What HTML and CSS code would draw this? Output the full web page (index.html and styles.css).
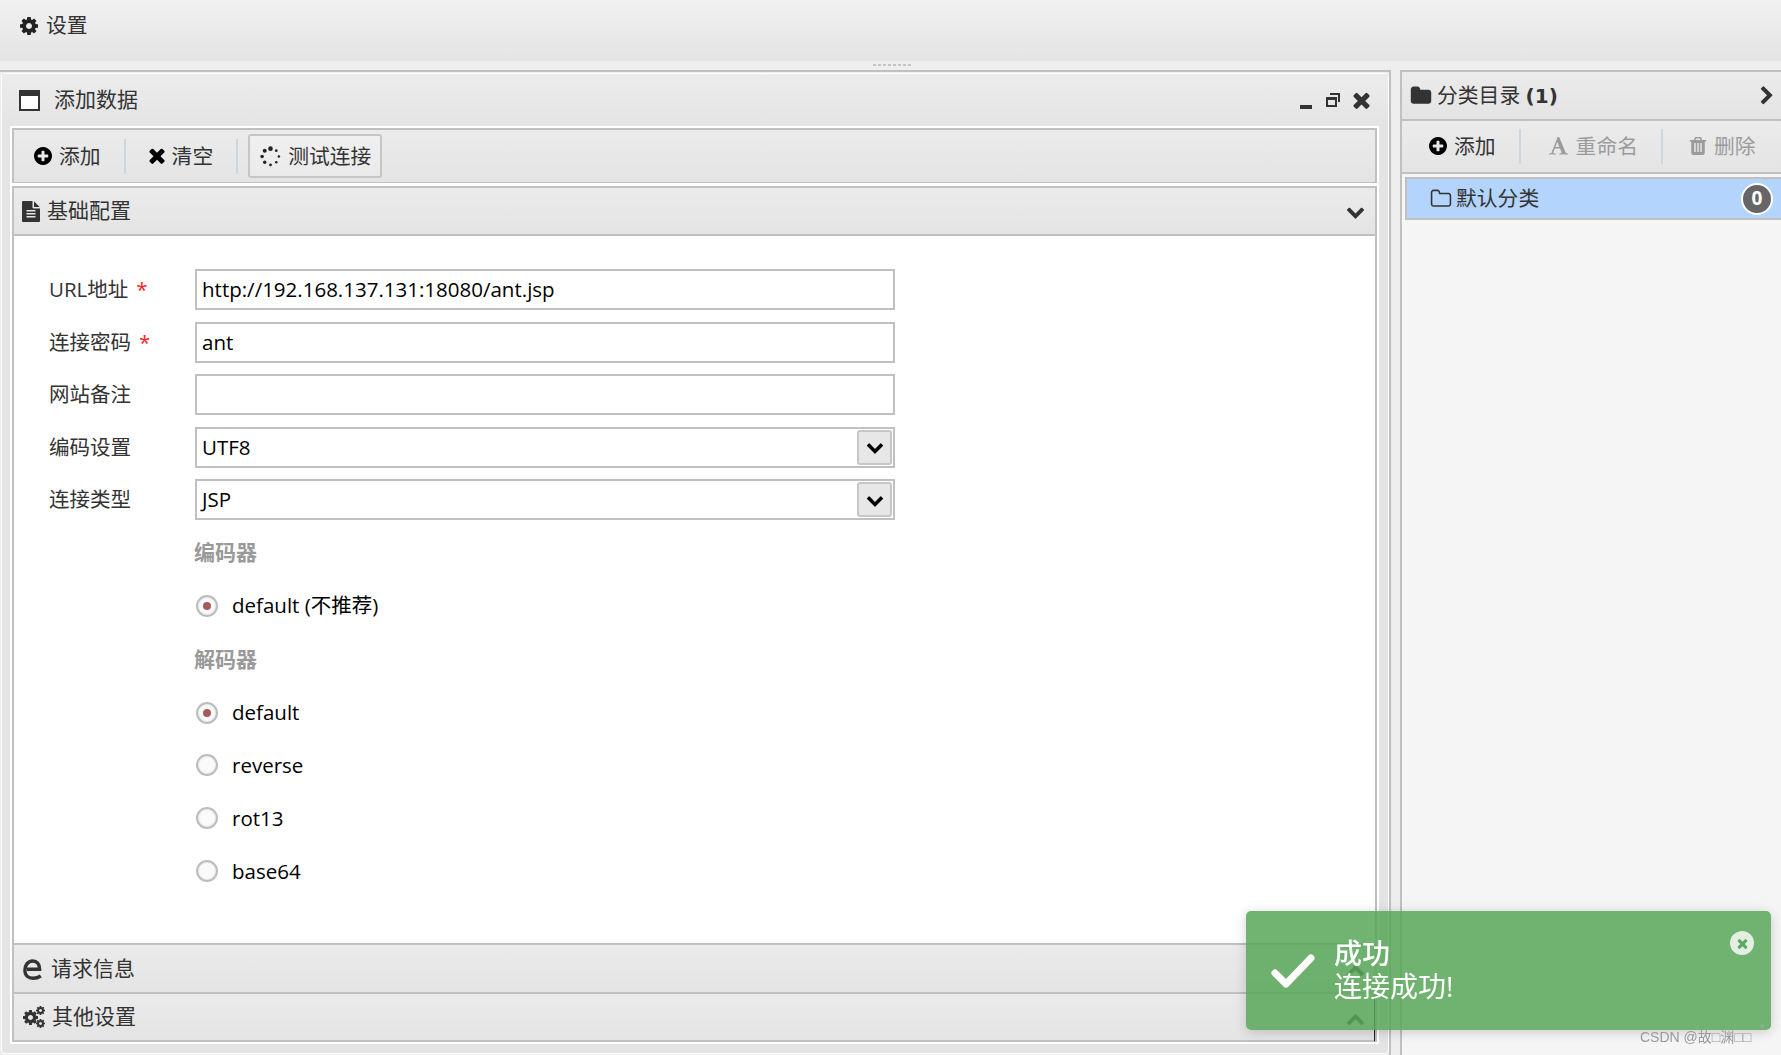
FILE: index.html
```html
<!DOCTYPE html>
<html lang="zh-CN">
<head>
<meta charset="utf-8">
<title>添加数据</title>
<link rel="stylesheet" href="styles.css">
</head>
<body>
<svg class="defs" width="0" height="0" aria-hidden="true">
  <symbol id="i-cog" viewBox="128 128 1536 1536"><path d="M1152 896q0-106-75-181t-181-75-181 75-75 181 75 181 181 75 181-75 75-181zm512-109v222q0 12-8 23t-20 13l-185 28q-19 54-39 91 35 50 107 138 10 12 10 25t-9 23q-27 37-99 108t-94 71q-12 0-26-9l-138-108q-44 23-91 38-16 136-29 186-7 28-36 28h-222q-14 0-24.5-8.5t-11.5-21.5l-28-184q-49-16-90-37l-141 107q-10 9-25 9-14 0-25-11-126-114-165-168-7-10-7-23 0-12 8-23 15-21 51-66.5t54-70.5q-27-50-41-99l-183-27q-13-2-21-12.5t-8-23.5v-222q0-12 8-23t19-13l186-28q14-46 39-92-40-57-107-138-10-12-10-24 0-10 9-23 26-36 98.5-107.5t94.5-71.5q13 0 26 10l138 107q44-23 91-38 16-136 29-186 7-28 36-28h222q14 0 24.5 8.5t11.5 21.5l28 184q49 16 90 37l142-107q9-9 24-9 13 0 25 10 129 119 165 170 7 8 7 22 0 12-8 23-15 21-51 66.5t-54 70.5q26 50 41 98l183 28q13 2 21 12.5t8 23.5z"/></symbol>
  <symbol id="i-plus" viewBox="128 128 1536 1536"><path d="M1344 960v-128q0-26-19-45t-45-19h-256v-256q0-26-19-45t-45-19h-128q-26 0-45 19t-19 45v256h-256q-26 0-45 19t-19 45v128q0 26 19 45t45 19h256v256q0 26 19 45t45 19h128q26 0 45-19t19-45v-256h256q26 0 45-19t19-45zm320-64q0 209-103 385.5t-279.5 279.5-385.5 103-385.5-103-279.5-279.5-103-385.5 103-385.5 279.5-279.5 385.5-103 385.5 103 279.5 279.5 103 385.5z"/></symbol>
  <symbol id="i-times" viewBox="280 230 1230 1330"><path d="M1490 1322q0 40-28 68l-136 136q-28 28-68 28t-68-28l-294-294-294 294q-28 28-68 28t-68-28l-136-136q-28-28-28-68t28-68l294-294-294-294q-28-28-28-68t28-68l136-136q28-28 68-28t68 28l294 294 294-294q28-28 68-28t68 28l136 136q28 28 28 68t-28 68l-294 294 294 294q28 28 28 68z"/></symbol>
  <symbol id="i-down" viewBox="0 0 1792 1792"><path d="M1683 808l-742 741q-19 19-45 19t-45-19l-742-741q-19-19-19-45.5t19-45.5l166-165q19-19 45-19t45 19l531 531 531-531q19-19 45-19t45 19l166 165q19 19 19 45.5t-19 45.5z"/></symbol>
  <symbol id="i-up" viewBox="0 0 1792 1792"><path d="M1683 1331l-166 165q-19 19-45 19t-45-19l-531-531-531 531q-19 19-45 19t-45-19l-166-165q-19-19-19-45.5t19-45.5l742-741q19-19 45-19t45 19l742 741q19 19 19 45.5t-19 45.5z"/></symbol>
  <symbol id="i-right" viewBox="0 0 1792 1792"><path d="M1363 877l-742 742q-19 19-45 19t-45-19l-166-166q-19-19-19-45t19-45l531-531-531-531q-19-19-19-45t19-45l166-166q19-19 45-19t45 19l742 742q19 19 19 45t-19 45z"/></symbol>
  <symbol id="i-folder" viewBox="0 0 1792 1792"><path d="M1728 608v704q0 92-66 158t-158 66h-1216q-92 0-158-66t-66-158v-960q0-92 66-158t158-66h320q92 0 158 66t66 158v32h672q92 0 158 66t66 158z"/></symbol>
  <symbol id="i-folder-o" viewBox="0 0 1792 1792"><path d="M1600 1312v-704q0-40-28-68t-68-28h-704q-40 0-68-28t-28-68v-64q0-40-28-68t-68-28h-320q-40 0-68 28t-28 68v960q0 40 28 68t68 28h1216q40 0 68-28t28-68zm128-704v704q0 92-66 158t-158 66h-1216q-92 0-158-66t-66-158v-960q0-92 66-158t158-66h320q92 0 158 66t66 158v32h672q92 0 158 66t66 158z"/></symbol>
  <symbol id="i-file" viewBox="128 0 1536 1792"><path d="M1596 476q14 14 28 36h-472v-472q22 14 36 28zm-476 164h544v1056q0 40-28 68t-68 28h-1344q-40 0-68-28t-28-68v-1600q0-40 28-68t68-28h800v544q0 40 28 68t68 28zm160 736v-64q0-14-9-23t-23-9h-704q-14 0-23 9t-9 23v64q0 14 9 23t23 9h704q14 0 23-9t9-23zm0-256v-64q0-14-9-23t-23-9h-704q-14 0-23 9t-9 23v64q0 14 9 23t23 9h704q14 0 23-9t9-23zm0-256v-64q0-14-9-23t-23-9h-704q-14 0-23 9t-9 23v64q0 14 9 23t23 9h704q14 0 23-9t9-23z"/></symbol>
  <symbol id="i-trash" viewBox="128 128 1536 1536"><path d="M704 1376v-704q0-14-9-23t-23-9h-64q-14 0-23 9t-9 23v704q0 14 9 23t23 9h64q14 0 23-9t9-23zm256 0v-704q0-14-9-23t-23-9h-64q-14 0-23 9t-9 23v704q0 14 9 23t23 9h64q14 0 23-9t9-23zm256 0v-704q0-14-9-23t-23-9h-64q-14 0-23 9t-9 23v704q0 14 9 23t23 9h64q14 0 23-9t9-23zm-544-992h448l-48-117q-7-9-17-11h-317q-10 2-17 11zm928 32v64q0 14-9 23t-23 9h-96v948q0 83-47 143.5t-113 60.5h-832q-66 0-113-58.5t-47-141.5v-952h-96q-14 0-23-9t-9-23v-64q0-14 9-23t23-9h309l70-167q15-37 54-63t79-26h320q40 0 79 26t54 63l70 167h309q14 0 23 9t9 23z"/></symbol>
  <symbol id="i-font" viewBox="64 128 1664 1664"><path d="M789 559l-170 450q33 0 136.5 2t160.5 2q19 0 57-2-87-253-184-452zm-725 1105l2-79q23-7 56-12.5t57-10.5 49.5-14.5 44.5-29 31-50.5l237-616 280-724h128q8 14 11 21l205 480q33 78 106 257.5t114 274.5q15 34 58 144.5t72 168.5q20 45 35 57 19 15 88 29.5t84 20.5q6 38 6 57 0 5-.5 13.5t-.5 12.5q-63 0-190-8t-191-8q-76 0-215 7t-178 8q0-43 4-78l131-28q1 0 12.5-2.5t15.5-3.5 14.5-4.5 15-6.5 11-8 9-11 2.5-14q0-16-31-96.5t-72-177.5-42-100l-450-2q-26 58-76.5 195.5t-50.5 162.5q0 22 14 37.5t43.5 24.5 49 13.5 57.5 8.5 41 4q1 19 1 58 0 9-2 27-58 0-174.5-10t-174.5-10q-8 0-26.5 4t-21.5 4q-80 14-188 14z"/></symbol>
</svg>

<header class="topbar">
  <svg class="ic ic-18"><use href="#i-cog"/></svg>
  <span>设置</span>
</header>
<div class="splitter"><span class="grip"></span></div>

<main class="main">
  <section class="left">
    <div class="win">
      <div class="win-head">
        <svg class="window-ic" viewBox="0 0 21 21"><rect x="1" y="1" width="19" height="19" fill="#fff" stroke="#333" stroke-width="2"/><rect x="0" y="0" width="21" height="6" fill="#333"/></svg>
        <span class="win-title">添加数据</span>
        <span class="win-ctrls">
          <svg class="min-ic" viewBox="0 0 12 4"><rect width="12" height="4" fill="#333"/></svg>
          <svg class="restore-ic" viewBox="0 0 14 14"><path d="M4 1h9v8M1 5h9v8H1z M1 6h9" fill="none" stroke="#333" stroke-width="2"/></svg>
          <svg class="ic close-ic"><use href="#i-times"/></svg>
        </span>
      </div>
      <div class="win-body">
        <div class="toolbar">
          <span class="tool"><svg class="ic ic-plus black"><use href="#i-plus"/></svg>添加</span>
          <span class="sep"></span>
          <span class="tool"><svg class="ic ic-x black"><use href="#i-times"/></svg>清空</span>
          <span class="sep"></span>
          <span class="tool tool-btn">
            <svg class="spin" viewBox="0 0 20 20"><g fill="#222"><circle cx="10" cy="2.5" r="2.2"/><circle cx="15.5" cy="4.5" r="1.3"/><circle cx="18" cy="10" r="1.2"/><circle cx="15.5" cy="15.5" r="1.2"/><circle cx="10" cy="18" r="1.3"/><circle cx="4.5" cy="15.5" r="1.6"/><circle cx="2" cy="10" r="1.7"/><circle cx="4.5" cy="4.5" r="1.9"/></g></svg>
            测试连接
          </span>
        </div>
        <div class="acc-head acc-open">
          <svg class="ic doc-ic"><use href="#i-file"/></svg>
          <span>基础配置</span>
          <svg class="ic chev"><use href="#i-down"/></svg>
        </div>
        <form class="form">
          <div class="row"><label class="lbl">URL地址<i class="req">*</i></label><div class="field">http://192.168.137.131:18080/ant.jsp</div></div>
          <div class="row"><label class="lbl">连接密码<i class="req">*</i></label><div class="field">ant</div></div>
          <div class="row"><label class="lbl">网站备注</label><div class="field"></div></div>
          <div class="row"><label class="lbl">编码设置</label><div class="field select">UTF8<span class="sel-btn"><svg class="ic ic-18 black"><use href="#i-down"/></svg></span></div></div>
          <div class="row"><label class="lbl">连接类型</label><div class="field select">JSP<span class="sel-btn"><svg class="ic ic-18 black"><use href="#i-down"/></svg></span></div></div>
          <div class="row row-first"><span class="group">编码器</span></div>
          <div class="row"><span class="opt"><span class="radio on"></span>default (不推荐)</span></div>
          <div class="row row-gap"><span class="group">解码器</span></div>
          <div class="row"><span class="opt"><span class="radio on"></span>default</span></div>
          <div class="row"><span class="opt"><span class="radio"></span>reverse</span></div>
          <div class="row row-nudge"><span class="opt"><span class="radio"></span>rot13</span></div>
          <div class="row row-nudge"><span class="opt"><span class="radio"></span>base64</span></div>
        </form>
        <div class="acc-head acc-low">
          <svg class="edge-ic" viewBox="0 0 20 22"><path d="M4 11.2H16.6C16.6 6 13.8 3 9.8 3C4.6 3 1.9 7.5 1.9 12.2C1.9 17.6 5.5 20.3 10 20.3C13 20.3 15.6 19.5 17.8 18" fill="none" stroke="#333" stroke-width="3.4"/></svg>
          <span>请求信息</span>
          <svg class="ic chev"><use href="#i-up"/></svg>
        </div>
        <div class="acc-head acc-low acc-last">
          <span class="cogs"><svg class="ic cog-a"><use href="#i-cog"/></svg><svg class="ic cog-b"><use href="#i-cog"/></svg><svg class="ic cog-c"><use href="#i-cog"/></svg></span>
          <span>其他设置</span>
          <svg class="ic chev"><use href="#i-up"/></svg>
        </div>
      </div>
      <span class="edge-line"></span>
    </div>
  </section>

  <aside class="right">
    <div class="r-head">
      <svg class="ic ic-20"><use href="#i-folder"/></svg>
      <span>分类目录 <b>(1)</b></span>
      <svg class="ic r-chev"><use href="#i-right"/></svg>
    </div>
    <div class="r-tools">
      <span class="tool rt-add"><svg class="ic ic-plus black"><use href="#i-plus"/></svg>添加</span>
      <span class="sep"></span>
      <span class="tool rt-off rt-ren"><svg class="ic ic-19"><use href="#i-font"/></svg>重命名</span>
      <span class="sep"></span>
      <span class="tool rt-off rt-del"><svg class="ic ic-trash"><use href="#i-trash"/></svg>删除</span>
    </div>
    <div class="r-item">
      <svg class="ic ic-20"><use href="#i-folder-o"/></svg>
      <span>默认分类</span>
      <span class="badge">0</span>
    </div>
  </aside>
</main>

<div class="toast">
  <svg class="toast-check" viewBox="0 0 44 36"><path d="M4 20l11 11L40 5" fill="none" stroke="#fff" stroke-width="7" stroke-linecap="round" stroke-linejoin="round"/></svg>
  <div class="toast-text"><div class="toast-title">成功</div><div>连接成功!</div></div>
  <span class="toast-close"><svg class="ic"><use href="#i-times"/></svg></span>
</div>
<div class="mark">CSDN @故□渊□□</div>
<div class="mark-dot">°</div>
</body>
</html>
```

FILE: styles.css
```css
* { box-sizing: border-box; }
html, body { margin: 0; height: 100%; }
body {
  width: 1781px;
  height: 1055px;
  overflow: hidden;
  background: #eeeeee;
  color: #333;
  font-family: "Open Sans", "Noto Sans CJK SC", sans-serif;
  font-size: 20.5px;
  line-height: 1.2;
}
.defs { position: absolute; }
.ic { fill: currentColor; display: block; flex: none; }
.ic-18 { width: 18px; height: 18px; }
.ic-19 { width: 19px; height: 19px; }
.ic-20 { width: 22px; height: 22px; }
.ic-plus { width: 18px; height: 18px; }
.ic-x { width: 16px; height: 17px; }
.ic-trash { width: 18px; height: 18px; }
.black { color: #000; }

.topbar {
  height: 61px;
  padding: 0 0 10px 20px;
  display: flex;
  align-items: center;
  gap: 8px;
  font-size: 20.8px;
  background: linear-gradient(#f1f1f1, #e4e4e4);
}
.topbar .ic { color: #222; }
.splitter { height: 9px; display: flex; justify-content: center; align-items: center; }
.grip {
  width: 40px;
  height: 2px;
  margin-left: 5px;
  margin-top: -1px;
  background: repeating-linear-gradient(90deg, #c4c4c4 0 3px, transparent 3px 5px);
}

.main { display: flex; height: 985px; }

.left {
  width: 1391px;
  border-top: 2px solid #c0c0c0;
  border-right: 2px solid #c0c0c0;
  padding: 1px 0 1px 1px;
}
.win {
  position: relative;
  height: 100%;
  border: 1px solid #fff;
  border-radius: 4px;
  background: #e4e4e4;
  padding: 0 9px 9px 8px;
  display: flex;
  flex-direction: column;
}
.win-head {
  height: 52px;
  margin: 0 -9px 0 -8px;
  padding: 0 18px 0 17px;
  display: flex;
  align-items: center;
  background: linear-gradient(#ececec, #e4e4e4);
}
.window-ic { width: 21px; height: 21px; flex: none; }
.win-title { margin-left: 14px; font-size: 21px; }
.win-ctrls { margin-left: auto; display: flex; align-items: center; color: #333; }
.min-ic { width: 12px; height: 4px; margin-top: 13px; }
.restore-ic { width: 14px; height: 14px; margin-left: 14px; }
.close-ic { width: 17px; height: 18px; margin-left: 13px; }

.win-body {
  flex: 1;
  display: flex;
  flex-direction: column;
  border: 2px solid #fff;
  background: #fff;
  font-size: 21px;
}
.toolbar {
  height: 55px;
  border: 2px solid #c0c0c0;
  border-bottom-width: 1px;
  background: linear-gradient(#ebebeb, #e4e4e4);
  display: flex;
  align-items: center;
  padding: 0 0 0 20px;
  margin-bottom: 3px;
  font-size: 20.8px;
}
.tool { display: flex; align-items: center; gap: 7px; color: #333; white-space: nowrap; }
.sep { width: 2px; height: 35px; background: #c9d8df; flex: none; }
.toolbar .sep { margin: 0 23px; }
.toolbar .sep + .tool-btn { margin-left: -13px; }
.tool-btn {
  height: 44px;
  padding: 0 9px 0 10px;
  border: 2px solid #c6c6c6;
  border-radius: 3px;
  background: linear-gradient(#f0f0f0, #eaeaea);
}
.spin { width: 21px; height: 21px; flex: none; }

.acc-head {
  height: 50px;
  display: flex;
  align-items: center;
  gap: 7px;
  padding: 0 10px 0 8px;
  background: linear-gradient(#ebebeb, #e4e4e4);
  border: 2px solid #c0c0c0;
  border-width: 2px 2px 0 2px;
  color: #333;
}
.acc-open { border-bottom-width: 2px; }
.doc-ic { width: 18px; height: 21px; }
.chev { width: 19px; height: 19px; margin-left: auto; color: #333; }
.acc-low { border-top-width: 2px; height: 49px; padding-left: 9px; }
.acc-low .chev { margin-top: 2px; }
.acc-last { height: 50px; border-bottom-width: 2px; }
.edge-ic { width: 20px; height: 22px; flex: none; margin-right: 1px; }
.cogs { position: relative; width: 22px; height: 22px; flex: none; color: #333; }
.cog-a { position: absolute; left: 0; top: 4px; width: 15px; height: 15px; }
.cog-b { position: absolute; right: 0; top: 0; width: 9px; height: 9px; }
.cog-c { position: absolute; right: 0; bottom: 0; width: 9px; height: 9px; }

.form {
  flex: 1;
  border: 2px solid #c0c0c0;
  border-width: 0 2px;
  padding: 33px 0 0 28px;
  display: flex;
  flex-direction: column;
  gap: 11.5px;
  background: #fff;
  font-size: 20.5px;
}
.row { display: flex; align-items: center; min-height: 41px; padding-left: 153px; color: #000; }
.row-first { margin-top: 1px; }
.row-gap { margin-top: 2px; }
.row-nudge { margin-top: 0.7px; }
.row:has(.lbl) { padding-left: 7px; }
.lbl { width: 146px; flex: none; color: #333; }
.req { color: #f22; font-style: normal; margin-left: 8px; }
.field {
  position: relative;
  width: 700px;
  height: 41px;
  padding: 0 5px;
  border: 2px solid #c0c0c0;
  background: #fff;
  color: #000;
  display: flex;
  align-items: center;
}
.sel-btn {
  position: absolute;
  right: 1px;
  top: 1px;
  width: 35px;
  height: 35px;
  border: 2px solid #c6c6c6;
  border-radius: 3px;
  background: #e7e7e7;
  display: flex;
  align-items: center;
  justify-content: center;
}
.group { color: #999; font-weight: 600; font-size: 21px; margin-left: -1px; }
.opt { display: flex; align-items: center; gap: 14px; margin-left: 1px; }
.radio {
  width: 22px;
  height: 22px;
  border-radius: 50%;
  border: 2px solid #bdbdbd;
  background: #fafafa;
  box-shadow: inset 0 0 2px #ccc;
  flex: none;
  position: relative;
}
.radio.on::after {
  content: "";
  position: absolute;
  left: 5px;
  top: 5px;
  width: 8px;
  height: 8px;
  border-radius: 50%;
  background: #a65a5a;
}

.edge-line { position: absolute; left: 1372px; top: 921px; width: 1px; height: 46px; background: #222; }

.right {
  flex: 1;
  margin-left: 9px;
  border-left: 2px solid #c0c0c0;
  background: #f5f5f5;
  display: flex;
  flex-direction: column;
  font-size: 20.8px;
}
.r-head {
  height: 51px;
  border-top: 2px solid #c0c0c0;
  border-bottom: 2px solid #c0c0c0;
  background: linear-gradient(#ebebeb, #e4e4e4);
  display: flex;
  align-items: center;
  gap: 5px;
  padding: 0 4px 0 8px;
}
.r-head b { font-family: "DejaVu Sans", sans-serif; font-size: 20px; }
.r-chev { width: 20px; height: 20px; margin-left: auto; }
.r-tools {
  height: 51px;
  display: flex;
  align-items: center;
  background: linear-gradient(#ebebeb, #e4e4e4);
  box-shadow: 0 2px 0 #c0c0c0;
  padding: 0 0 0 27px;
}
.r-tools .sep { margin: 0 23px; }
.rt-off { color: #333; opacity: .42; }
.rt-ren { margin-left: 5px; gap: 8px; }
.rt-del { margin-left: 3px; }
.r-item {
  margin: 5px 0 0 3px;
  height: 43px;
  border: 2px solid #c0c0c0;
  border-right: 0;
  background: #b3d4fc;
  display: flex;
  align-items: center;
  gap: 4px;
  padding: 0 8px 0 23px;
}
.badge {
  margin-left: auto;
  width: 32px;
  height: 32px;
  border-radius: 50%;
  border: 2px solid #fff;
  background: #666;
  color: #fff;
  font-weight: 700;
  font-size: 19px;
  display: flex;
  align-items: center;
  justify-content: center;
}

.toast {
  position: fixed;
  left: 1246px;
  top: 911px;
  width: 525px;
  height: 119px;
  border-radius: 5px;
  background: rgba(88, 166, 88, 0.85);
  box-shadow: 0 2px 12px rgba(0, 0, 0, .18);
  color: #fff;
  display: flex;
  align-items: center;
  padding: 0 0 2px 25px;
  font-size: 28px;
}
.toast-check { width: 44px; height: 36px; flex: none; margin-top: 2px; }
.toast-text { margin-left: 19px; line-height: 33px; }
.toast-title { font-weight: 500; }
.toast-close {
  position: absolute;
  right: 17px;
  top: 20px;
  width: 24px;
  height: 24px;
  border-radius: 50%;
  background: #e4efe4;
  color: #5fa860;
  display: flex;
  align-items: center;
  justify-content: center;
}
.toast-close .ic { width: 11px; height: 11px; }
.mark {
  position: fixed;
  left: 1640px;
  top: 1028px;
  font: 14px/18px "Liberation Sans", "Noto Sans CJK SC", sans-serif;
  color: #999;
  white-space: nowrap;
}
.mark-dot { position: fixed; left: 1760px; top: 1022px; font: 12px/14px "Liberation Sans", sans-serif; color: #aaa; }
```
